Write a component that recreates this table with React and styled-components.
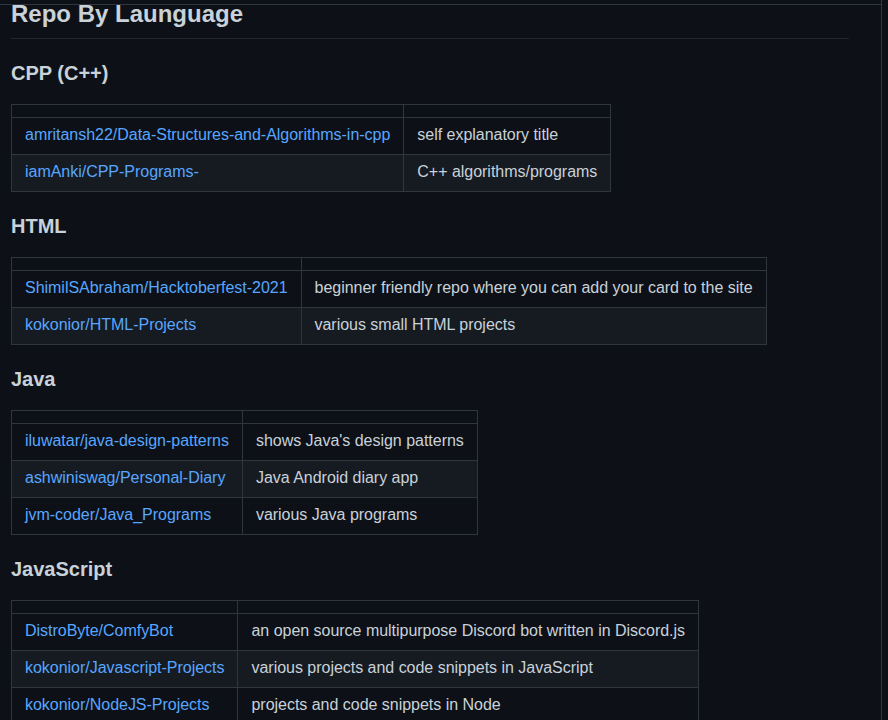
import React from 'react';
import styled, { createGlobalStyle } from 'styled-components';

const GlobalStyle = createGlobalStyle`
  html, body {
    margin: 0;
    padding: 0;
    background: #0d1117;
  }
  body {
    font-family: "Liberation Sans", Arial, sans-serif;
    color: #c9d1d9;
    font-size: 16px;
    line-height: 1.5;
  }
`;

const Frame = styled.div`
  position: relative;
  width: 881px;
  height: 720px;
  overflow: hidden;
  border-right: 1px solid #30363d;
  background: #0d1117;
`;

const TopRule = styled.div`
  position: absolute;
  top: 4px;
  left: 0;
  right: 0;
  height: 1px;
  background: #30363d;
`;

const Article = styled.article`
  padding: 0 32px 0 11px;
`;

const Title = styled.h2`
  margin: 0 0 16px;
  padding-top: 0;
  padding-bottom: 10px;
  font-size: 24px;
  line-height: 28px;
  font-weight: 600;
  border-bottom: 1px solid #21262d;
`;

const Section = styled.h3`
  margin: 24px 0 16px;
  padding-bottom: 4px;
  font-size: 20px;
  line-height: 21px;
  font-weight: 600;
`;

const Table = styled.table`
  border-collapse: collapse;
  border-spacing: 0;
  margin: 0 0 16px;
  font-size: 16px;
  letter-spacing: -0.022px;

  th, td {
    padding: 6px 13px;
    border: 1px solid #30363d;
    text-align: left;
    white-space: nowrap;
  }
  td {
    line-height: 22px;
    padding-bottom: 8px;
  }
  th {
    height: 0;
    line-height: 0;
  }
  tbody tr:nth-child(2n) {
    background: #161b22;
  }
`;

const RepoLink = styled.a`
  color: #58a6ff;
  text-decoration: none;
`;

const sections = [
  {
    name: 'CPP (C++)',
    rows: [
      ['amritansh22/Data-Structures-and-Algorithms-in-cpp', 'self explanatory title'],
      ['iamAnki/CPP-Programs-', 'C++ algorithms/programs'],
    ],
  },
  {
    name: 'HTML',
    rows: [
      ['ShimilSAbraham/Hacktoberfest-2021', 'beginner friendly repo where you can add your card to the site'],
      ['kokonior/HTML-Projects', 'various small HTML projects'],
    ],
  },
  {
    name: 'Java',
    rows: [
      ['iluwatar/java-design-patterns', "shows Java's design patterns"],
      ['ashwiniswag/Personal-Diary', 'Java Android diary app'],
      ['jvm-coder/Java_Programs', 'various Java programs'],
    ],
  },
  {
    name: 'JavaScript',
    rows: [
      ['DistroByte/ComfyBot', 'an open source multipurpose Discord bot written in Discord.js'],
      ['kokonior/Javascript-Projects', 'various projects and code snippets in JavaScript'],
      ['kokonior/NodeJS-Projects', 'projects and code snippets in Node'],
    ],
  },
];

export default function App() {
  return (
    <>
      <GlobalStyle />
      <Frame>
        <Article>
          <Title>Repo By Launguage</Title>
          {sections.map((s) => (
            <React.Fragment key={s.name}>
              <Section>{s.name}</Section>
              <Table>
                <thead>
                  <tr>
                    <th></th>
                    <th></th>
                  </tr>
                </thead>
                <tbody>
                  {s.rows.map(([repo, desc]) => (
                    <tr key={repo}>
                      <td>
                        <RepoLink href="#">{repo}</RepoLink>
                      </td>
                      <td>{desc}</td>
                    </tr>
                  ))}
                </tbody>
              </Table>
            </React.Fragment>
          ))}
        </Article>
        <TopRule />
      </Frame>
    </>
  );
}
